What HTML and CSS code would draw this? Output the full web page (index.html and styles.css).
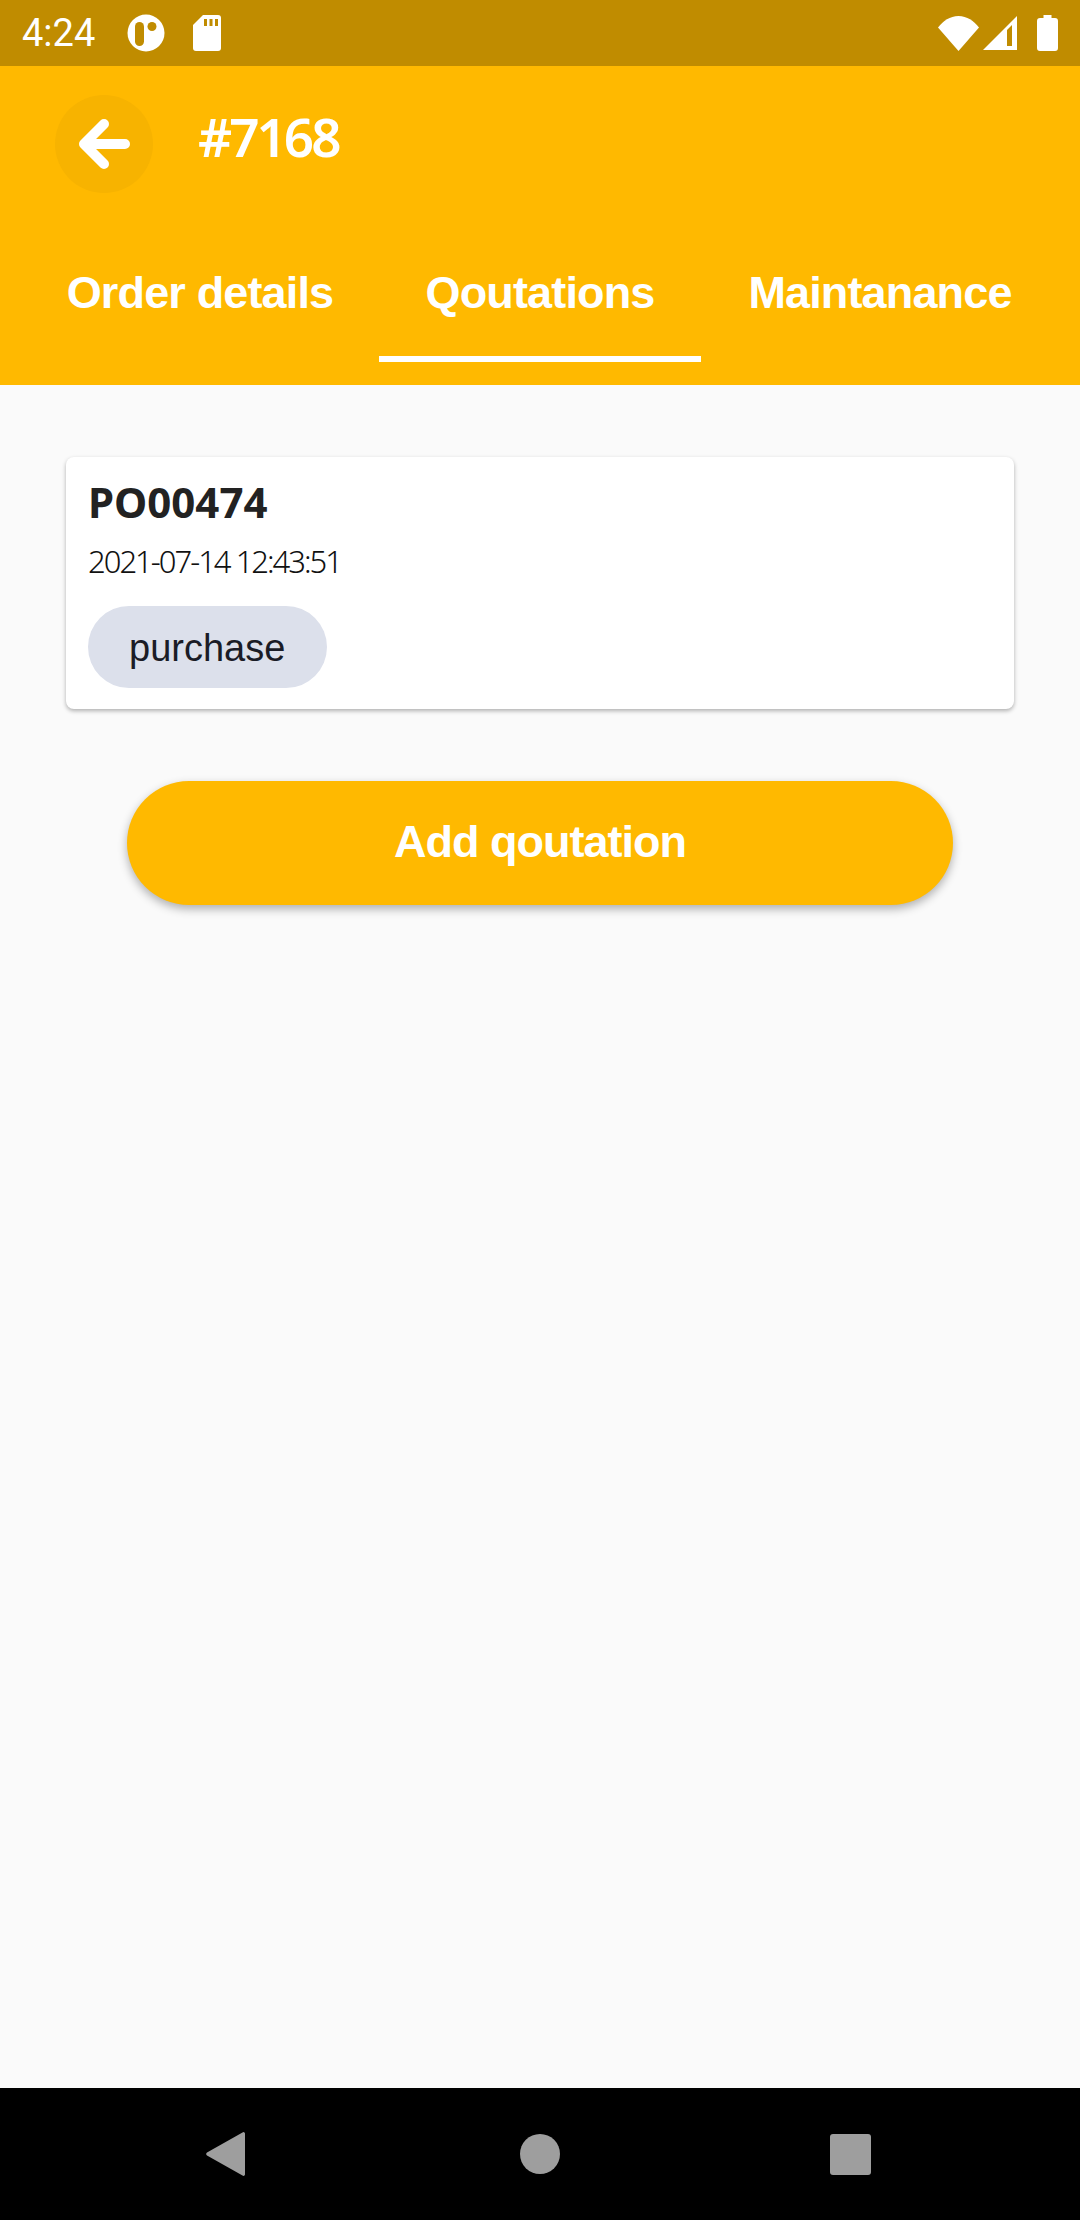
FILE: index.html
```html
<!DOCTYPE html>
<html lang="en">
<head>
  <meta charset="UTF-8" />
  <meta name="viewport" content="width=device-width, initial-scale=1.0"/>
  <title>#7168</title>
  <link rel="stylesheet" href="styles.css">
</head>

<body>
  <div class="statusbar">
    <div class="status-left">
      <span class="clock">4:24</span>
      <svg class="ic-app" width="38" height="38" viewBox="0 0 38 38">
        <circle cx="19" cy="19" r="18.500" fill="#fff"/>
        <rect x="8" y="8" width="9" height="24" rx="4.500" fill="#c08c00"/>
        <circle cx="25" cy="12.500" r="4.500" fill="#c08c00"/>
      </svg>
      <svg class="ic-sd" width="28" height="36" viewBox="0 0 28 36">
        <path d="M10 0H25a3 3 0 0 1 3 3V33a3 3 0 0 1-3 3H3a3 3 0 0 1-3-3V10z" fill="#fff"/>
        <path d="M11 4h3v7h-3zM16.500 4h3v7h-3zM22 4h3v7h-3z" fill="#c08c00"/>
      </svg>
    </div>
    <div class="status-right">
      <svg width="41" height="35" viewBox="0 0 41 35">
        <path d="M0 11.500C5 5 12 0 20.500 0S36 5 41 11.500L20.500 35z" fill="#fff"/>
      </svg>
      <svg class="ic-signal" width="34" height="34" viewBox="0 0 34 34">
        <path d="M0 34 34 0V34z" fill="#fff"/>
        <path d="M24 14 29 9V30H24z" fill="#c08c00"/>
      </svg>
      <svg class="ic-batt" width="21" height="36" viewBox="0 0 21 36">
        <path d="M6.500 0h8v3h3.500a3 3 0 0 1 3 3V33a3 3 0 0 1-3 3H3a3 3 0 0 1-3-3V6a3 3 0 0 1 3-3h3.500z" fill="#fff"/>
      </svg>
    </div>
  </div>

  <div class="header">
    <div class="toolbar">
      <div class="back-btn">
        <svg width="52" height="52" viewBox="0 0 52 52">
          <path d="M26 6 6 26 26 46M6 26H47" fill="none" stroke="#fff" stroke-width="10" stroke-linecap="round" stroke-linejoin="round"/>
        </svg>
      </div>
      <h1 class="order-no">#7168</h1>
    </div>
    <div class="tabs">
      <div class="tab">Order details</div>
      <div class="tab active">Qoutations</div>
      <div class="tab">Maintanance</div>
    </div>
  </div>

  <div class="content">
    <div class="card">
      <div class="card-title">PO00474</div>
      <div class="card-date">2021-07-14 12:43:51</div>
      <span class="chip">purchase</span>
    </div>
    <button class="add-btn">Add qoutation</button>
  </div>

  <div class="navbar">
    <svg class="nav-back" width="39" height="46" viewBox="0 0 39 46">
      <path d="M39 2.500V43.500a1.500 1.500 0 0 1-2.500 1L1 24.500a2 2 0 0 1 0-3L36.500 1.500a1.500 1.500 0 0 1 2.500 1z" fill="#9e9e9e"/>
    </svg>
    <div class="nav-circle"></div>
    <div class="nav-square"></div>
  </div>
</body>
</html>
```

FILE: styles.css
```css
* {
  box-sizing: border-box;
}
body {
  margin: 0;
  height: 2220px;
  display: flex;
  flex-direction: column;
  background: #fafafa;
  font-family: 'Liberation Sans', sans-serif;
  overflow: hidden;
}
.statusbar {
  height: 66px;
  flex: none;
  background: #c08c00;
  color: white;
  display: flex;
  justify-content: space-between;
  align-items: center;
  padding: 0 22px 0 22px;
}
.status-left {
  display: flex;
  align-items: center;
}
.clock {
  font-family: Roboto, sans-serif;
  font-size: 38px;
  width: 105px;
}
.ic-sd {
  margin-left: 28px;
}
.status-right {
  display: flex;
  align-items: center;
}
.ic-signal {
  margin-left: 4px;
}
.ic-batt {
  margin-left: 20px;
}
.header {
  height: 319px;
  flex: none;
  background: #ffb900;
  display: flex;
  flex-direction: column;
}
.toolbar {
  display: flex;
  align-items: center;
  padding: 29px 0 0 55px;
}
.back-btn {
  width: 98px;
  height: 98px;
  border-radius: 50%;
  background: #f7b300;
  display: flex;
  align-items: center;
  justify-content: center;
}
.order-no {
  margin: -15px 0 0 45px;
  font-family: 'Noto Sans', sans-serif;
  font-size: 53px;
  font-weight: 600;
  letter-spacing: -3px;
  color: white;
}
.tabs {
  display: flex;
  justify-content: center;
  margin-top: 76px;
  padding: 0 20px;
}
.tab {
  width: 340px;
  height: 93px;
  text-align: center;
  font-size: 45px;
  line-height: 48px;
  font-weight: bold;
  letter-spacing: -0.85px;
  color: white;
  position: relative;
}
.tab.active::after {
  content: "";
  position: absolute;
  left: 9px;
  right: 9px;
  bottom: 0;
  height: 6px;
  background: white;
}
.content {
  flex: 1;
  padding: 72px 66px 0;
  display: flex;
  flex-direction: column;
  align-items: center;
}
.card {
  width: 100%;
  height: 252px;
  background: white;
  border-radius: 8px;
  box-shadow: 0 2px 4px rgba(0, 0, 0, 0.3);
  padding: 20px 22px;
}
.card-title {
  font-family: 'Noto Sans', sans-serif;
  font-size: 42px;
  font-weight: 700;
  color: #222;
  line-height: 50px;
}
.card-date {
  font-family: 'Noto Sans', sans-serif;
  font-size: 31px;
  font-weight: 300;
  color: #111;
  line-height: 42px;
  margin-top: 13px;
  letter-spacing: -2px;
}
.chip {
  display: inline-block;
  margin-top: 24px;
  height: 82px;
  line-height: 84px;
  padding: 0 42px 0 41px;
  border-radius: 41px;
  background: #dce0eb;
  font-size: 38px;
  color: #1a1c26;
}
.add-btn {
  display: block;
  width: 826px;
  height: 124px;
  margin-top: 72px;
  padding-bottom: 3px;
  border: none;
  border-radius: 62px;
  background: #ffb900;
  box-shadow: 0 4px 10px rgba(0, 0, 0, 0.3);
  font-family: 'Liberation Sans', sans-serif;
  font-size: 45px;
  font-weight: bold;
  letter-spacing: -1px;
  color: white;
}
.navbar {
  height: 132px;
  flex: none;
  background: black;
  display: flex;
  align-items: center;
  padding-left: 206px;
}
.nav-back {
  margin-right: 275px;
}
.nav-circle {
  width: 40px;
  height: 40px;
  border-radius: 50%;
  background: #9e9e9e;
  margin-right: 270px;
}
.nav-square {
  width: 41px;
  height: 41px;
  border-radius: 3px;
  background: #9e9e9e;
}
```
